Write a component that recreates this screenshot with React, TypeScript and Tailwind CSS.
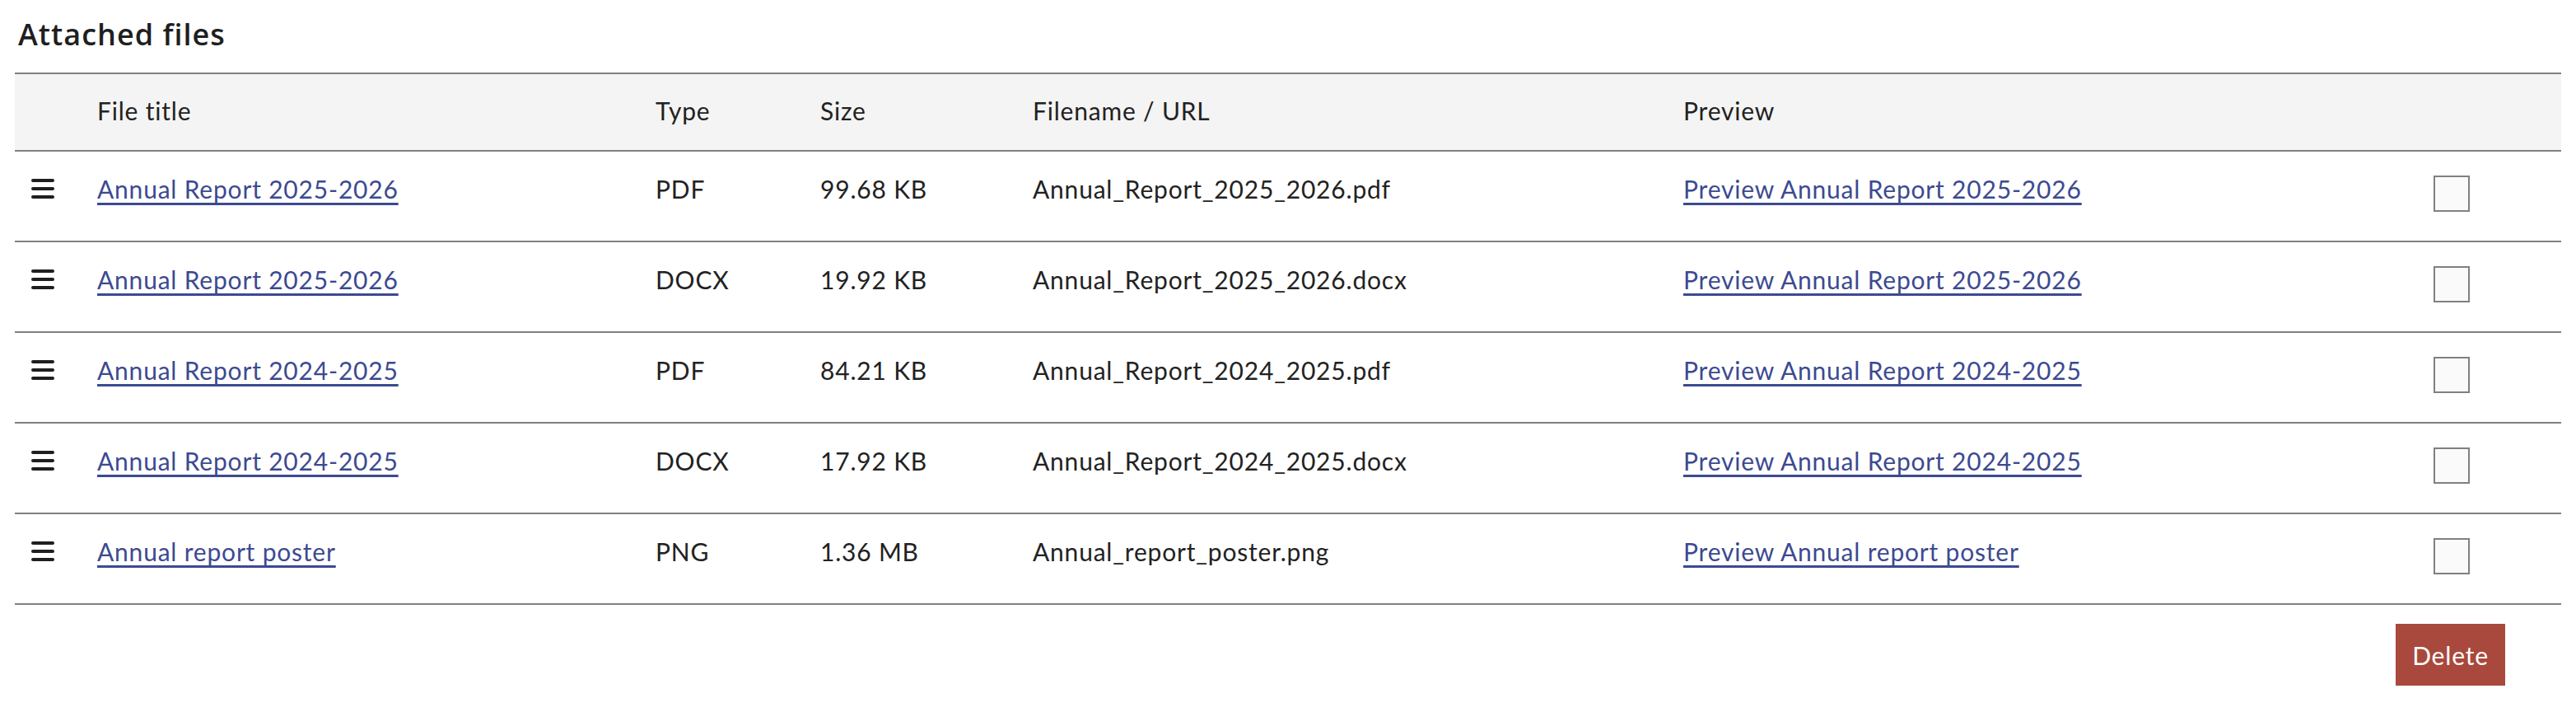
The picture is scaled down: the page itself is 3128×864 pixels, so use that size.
import React from "react";

type Row = { title: string; type: string; size: string; file: string };

const rows: Row[] = [
  { title: "Annual Report 2025-2026", type: "PDF", size: "99.68 KB", file: "Annual_Report_2025_2026.pdf" },
  { title: "Annual Report 2025-2026", type: "DOCX", size: "19.92 KB", file: "Annual_Report_2025_2026.docx" },
  { title: "Annual Report 2024-2025", type: "PDF", size: "84.21 KB", file: "Annual_Report_2024_2025.pdf" },
  { title: "Annual Report 2024-2025", type: "DOCX", size: "17.92 KB", file: "Annual_Report_2024_2025.docx" },
  { title: "Annual report poster", type: "PNG", size: "1.36 MB", file: "Annual_report_poster.png" },
];

const cols = "grid grid-cols-[100px_678px_200px_258px_790px_911px_1fr]";

function Handle() {
  return (
    <svg width="28" height="24" viewBox="0 0 28 24" className="block">
      <line x1="2" y1="2" x2="26" y2="2" stroke="#1f1f1f" strokeWidth="4" strokeLinecap="round" />
      <line x1="2" y1="12" x2="26" y2="12" stroke="#1f1f1f" strokeWidth="4" strokeLinecap="round" />
      <line x1="2" y1="22" x2="26" y2="22" stroke="#1f1f1f" strokeWidth="4" strokeLinecap="round" />
    </svg>
  );
}

export default function App() {
  return (
    <div className="bg-white min-h-[864px] px-[18px] pt-[20px] font-['Lato','Open_Sans',sans-serif] text-[#222222]">
      <h2 className="pl-[4px] font-['Open_Sans','Lato',sans-serif] text-[36px] leading-[44px] font-semibold tracking-[1px] text-[#1f1f1f]">
        Attached files
      </h2>
      <div className="mt-[24px] border-t-2 border-[#808080]">
        <div
          className={`${cols} h-[94px] bg-[#f4f4f4] border-b-2 border-[#808080] items-start text-[30px] leading-[40px] tracking-[0.8px]`}
        >
          <div />
          <div className="pt-[24px]">File title</div>
          <div className="pt-[24px]">Type</div>
          <div className="pt-[24px]">Size</div>
          <div className="pt-[24px]">Filename / URL</div>
          <div className="pt-[24px]">Preview</div>
          <div />
        </div>
        {rows.map((r, i) => (
          <div
            key={i}
            className={`${cols} h-[110px] border-b-2 border-[#808080] items-start text-[30px] leading-[40px] tracking-[0.8px]`}
          >
            <div className="pl-[20px] pt-[33px]">
              <Handle />
            </div>
            <div className="pt-[25px]">
              <a href="#" className="text-[#3c4a91] underline decoration-[3px] underline-offset-[5px]">
                {r.title}
              </a>
            </div>
            <div className="pt-[25px]">{r.type}</div>
            <div className="pt-[25px]">{r.size}</div>
            <div className="pt-[25px]">{r.file}</div>
            <div className="pt-[25px]">
              <a href="#" className="text-[#3c4a91] underline decoration-[3px] underline-offset-[5px]">
                Preview {r.title}
              </a>
            </div>
            <div className="pt-[29px]">
              <div className="w-[44px] h-[44px] border-2 border-[#808080] bg-[#fafafa]" />
            </div>
          </div>
        ))}
      </div>
      <div className="flex justify-end pr-[68px] mt-[23px]">
        <button className="w-[133px] h-[75px] bg-[#a9493d] text-white text-[30px] leading-none tracking-[0.8px]">
          Delete
        </button>
      </div>
    </div>
  );
}
